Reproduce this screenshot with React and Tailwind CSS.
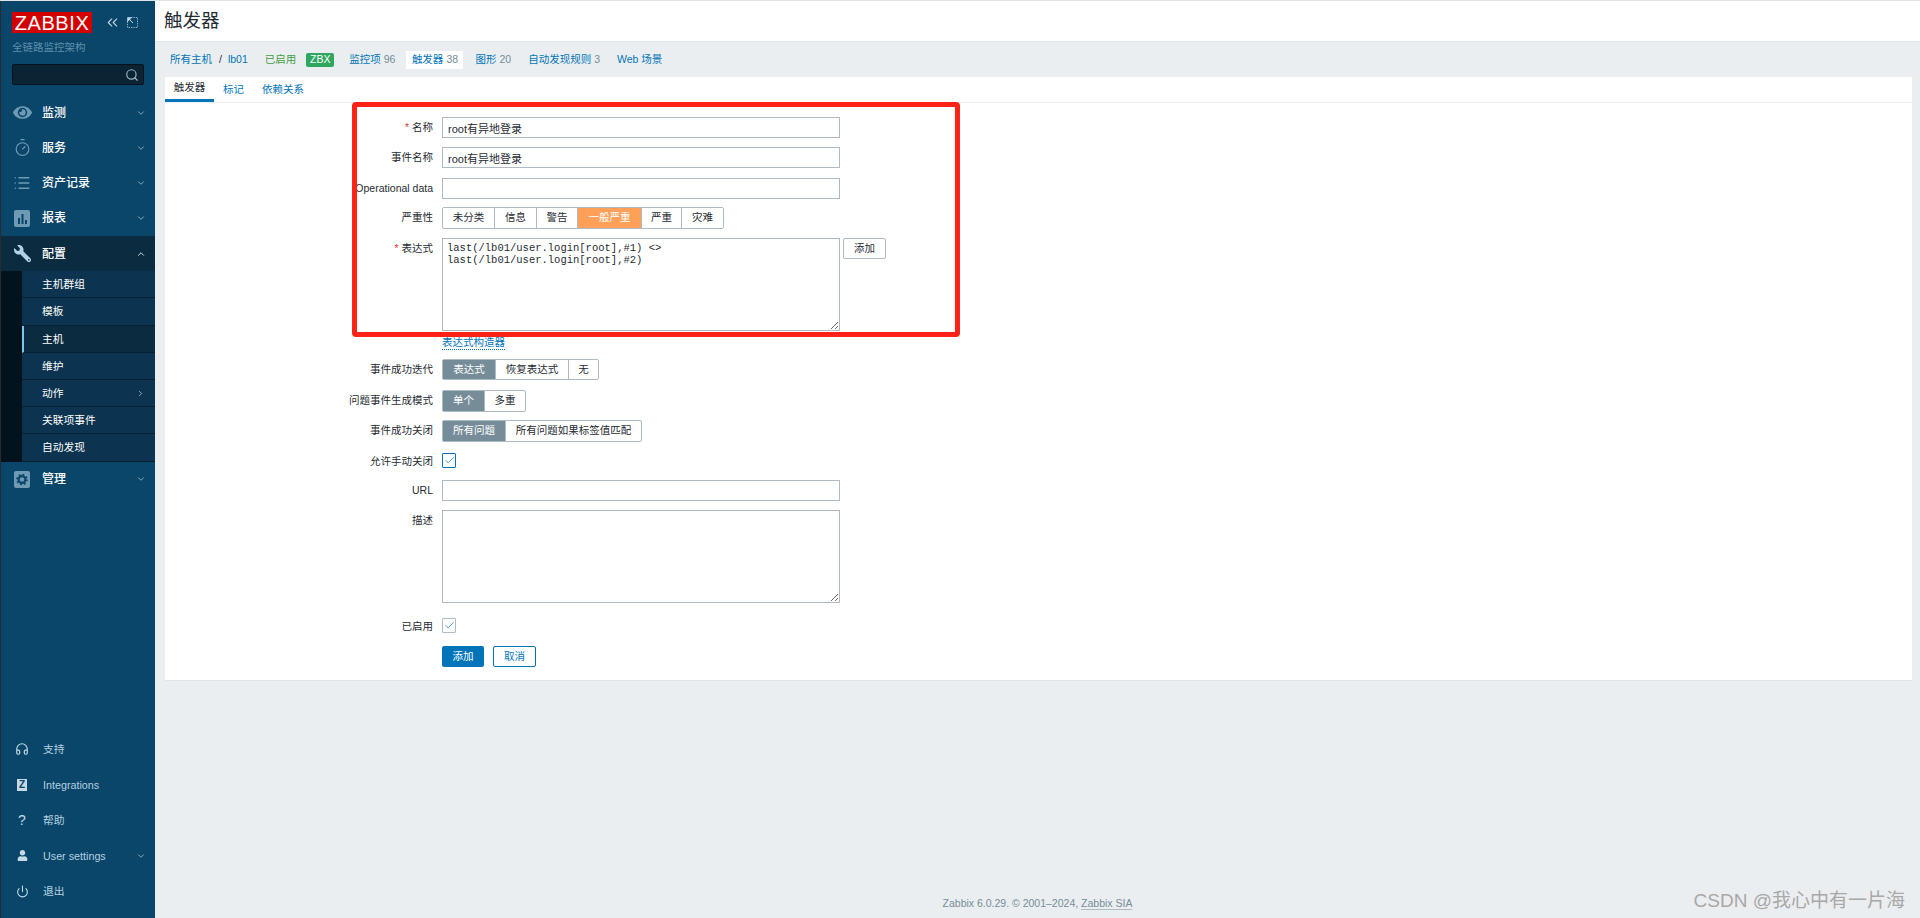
import { ChevronDown, ChevronRight, ChevronUp, ChevronsLeft, Check, Headphones, List, Power, Search, Timer } from "lucide-react";
import { FaEye, FaUser, FaWrench } from "react-icons/fa";

const font = { fontFamily: '"Liberation Sans", "Noto Sans CJK SC", sans-serif' };

function ReportIcon() {
    return (
        <svg width="16" height="17" viewBox="0 0 16 17">
            <rect x="0" y="0" width="16" height="17" rx="2" fill="#6f9ab4" />
            <rect x="4" y="8" width="2" height="6" fill="#0a466a" />
            <rect x="7.5" y="4" width="2" height="10" fill="#0a466a" />
            <rect x="11" y="10" width="2" height="4" fill="#0a466a" />
        </svg>
    );
}

function CogIcon() {
    return (
        <svg width="16" height="17" viewBox="0 0 16 17">
            <rect x="0" y="0" width="16" height="17" rx="2" fill="#6f9ab4" />
            <circle cx="8" cy="8.5" r="3.4" fill="none" stroke="#0a466a" strokeWidth="2.2" />
            <circle cx="8" cy="8.5" r="5" fill="none" stroke="#0a466a" strokeWidth="1.6" strokeDasharray="1.9 2" />
        </svg>
    );
}

function ExpandIcon() {
    return (
        <svg width="11" height="11" viewBox="0 0 11 11" fill="none">
            <path d="M4 .5h6.5V10.5H.5V4" stroke="#8fb1c6" strokeDasharray="1.4 1" />
            <path d="M.5 .5h4.2L.5 4.7z" fill="#c5d7e2" stroke="#c5d7e2" strokeWidth=".6" />
            <path d="M2 2l4 4" stroke="#c5d7e2" />
        </svg>
    );
}

function MenuRow({ icon, label, active, open }) {
    return (
        <div className={`flex h-[35.25px] items-center ${active ? "bg-[#0a2b40]" : ""}`}>
            <div className="flex w-[41px] justify-center pl-[1px] text-[#6f9ab4]">{icon}</div>
            <span className="flex-1 text-[12px] font-medium text-white">{label}</span>
            <span className="mr-[9px] text-[#9dbccd]">
                {open ? <ChevronUp size={10} strokeWidth={2} className="text-white" /> : <ChevronDown size={10} strokeWidth={2} />}
            </span>
        </div>
    );
}

function SubItem({ label, active, arrow }) {
    return (
        <div className={`flex h-[27.2px] items-center border-b border-[#05202f] text-[10.75px] text-white ${active ? "border-l-2 border-l-[#7fc6ef] bg-[#0a2b40] pl-[18px]" : "bg-[#0c3350] pl-[20px]"}`}>
            <span className="flex-1">{label}</span>
            {arrow && <ChevronRight size={9} strokeWidth={2} className="mr-[10px] text-[#b8cfdc]" />}
        </div>
    );
}

function BottomRow({ icon, label, arrow }) {
    return (
        <div className="flex h-[35.5px] items-center text-[10.75px] text-[#b4d0e0]">
            <div className="flex w-[42px] justify-center text-[#c5dae6]">{icon}</div>
            <span className="flex-1">{label}</span>
            {arrow && <ChevronDown size={10} strokeWidth={2} className="mr-[9px] text-[#9dbccd]" />}
        </div>
    );
}

function Sidebar() {
    return (
        <aside className="flex h-full w-[155px] shrink-0 flex-col justify-between border-l border-[#2b2b2b] bg-[#0a466a]">
            <div>
                <div className="flex items-center pl-[11px] pt-[11px]">
                    <div className="flex h-[21px] w-[80px] items-center justify-center bg-[#d40000] text-[20px] leading-none tracking-[0.6px] text-white">ZABBIX</div>
                    <ChevronsLeft size={17} strokeWidth={1.5} className="ml-[12px] text-[#c5d7e2]" />
                    <span className="ml-[6px]"><ExpandIcon /></span>
                </div>
                <div className="pl-[11px] pt-[7px] text-[10.5px] leading-[14px] text-[#5f8fab]">全链路监控架构</div>
                <div className="ml-[11px] mt-[10px] flex h-[21px] w-[132px] items-center justify-end rounded-[2px] border border-[#04131d] bg-[#0a2434] pr-[4px]">
                    <Search size={14} className="text-[#9db5c4]" />
                </div>
                <div className="pt-[10px]">
                    <MenuRow icon={<FaEye size={19} />} label="监测" />
                    <MenuRow icon={<Timer size={19} strokeWidth={1.5} />} label="服务" />
                    <MenuRow icon={<List size={18} strokeWidth={2} />} label="资产记录" />
                    <MenuRow icon={<ReportIcon />} label="报表" />
                    <MenuRow icon={<FaWrench size={17} className="-scale-x-100 text-[#b5d2e4]" />} label="配置" active open />
                    <div className="flex bg-[#03131d]">
                        <div className="w-[21px] shrink-0" />
                        <div className="flex-1">
                            <SubItem label="主机群组" />
                            <SubItem label="模板" />
                            <SubItem label="主机" active />
                            <SubItem label="维护" />
                            <SubItem label="动作" arrow />
                            <SubItem label="关联项事件" />
                            <SubItem label="自动发现" />
                        </div>
                    </div>
                    <MenuRow icon={<CogIcon />} label="管理" />
                </div>
            </div>
            <div className="pb-[9px]">
                <BottomRow icon={<Headphones size={14} strokeWidth={2} />} label="支持" />
                <BottomRow
                    icon={<span className="flex h-[12px] w-[10px] items-center justify-center bg-[#c5dae6] text-[10px] font-bold leading-none text-[#0a466a]">Z</span>}
                    label="Integrations"
                />
                <BottomRow icon={<span className="text-[14px] leading-none">?</span>} label="帮助" />
                <BottomRow icon={<FaUser size={11} />} label="User settings" arrow />
                <BottomRow icon={<Power size={13} strokeWidth={2} />} label="退出" />
            </div>
        </aside>
    );
}

function Row({ label, required, tight, children, className }) {
    return (
        <div className={`flex ${className}`}>
            <div className={`w-[268px] shrink-0 whitespace-nowrap text-right text-[10.5px] leading-[14px] text-[#1f2c33] ${tight ? "pt-px" : "pt-[3px]"}`}>
                {required && <span className="mr-[3px] text-[#e33734]">*</span>}
                {label}
            </div>
            <div className="ml-[9px] flex-1">{children}</div>
        </div>
    );
}

function TextInput({ value }) {
    return (
        <input
            readOnly
            value={value || ""}
            style={font}
            className="block h-[21px] w-[398px] border border-[#acbbc6] bg-white px-[5px] text-[11px] text-[#1f2c33] outline-none"
        />
    );
}

function Segments({ items, selected, color = "bg-[#768d99]", h = "h-[22px]" }) {
    return (
        <div className={`flex w-fit ${h} rounded-[2px] border border-[#acbbc6] bg-white text-[10.5px] text-[#1f2c33]`}>
            {items.map((item, i) => (
                <div
                    key={item.t}
                    style={{ width: item.w }}
                    className={`flex items-center justify-center ${i > 0 ? "border-l border-[#acbbc6]" : ""} ${i === selected ? `${color} text-white` : ""}`}
                >
                    {item.t}
                </div>
            ))}
        </div>
    );
}

function TickBox({ strong }) {
    return (
        <div className={`flex h-[15px] w-[14px] items-center justify-center rounded-[1px] border bg-white ${strong ? "border-[#0275b8]" : "border-[#acbbc6]"}`}>
            <Check size={11} strokeWidth={1.6} className="text-[#0275b8]" />
        </div>
    );
}

function TriggerForm() {
    return (
        <div className="relative pt-[14px]">
            <Row label="名称" required className="mb-[9px]"><TextInput value="root有异地登录" /></Row>
            <Row label="事件名称" className="mb-[10px]"><TextInput value="root有异地登录" /></Row>
            <Row label="Operational data" className="mb-[8px]"><TextInput /></Row>
            <Row label="严重性" className="mb-[9px]">
                <Segments
                    selected={3}
                    color="bg-[#ffa059]"
                    items={[
                        { t: "未分类", w: 51 },
                        { t: "信息", w: 42 },
                        { t: "警告", w: 41 },
                        { t: "一般严重", w: 64 },
                        { t: "严重", w: 40 },
                        { t: "灾难", w: 42 },
                    ]}
                />
            </Row>
            <Row label="表达式" required className="mb-[5px]">
                <div className="flex items-start">
                    <textarea
                        readOnly
                        value={"last(/lb01/user.login[root],#1) <>\nlast(/lb01/user.login[root],#2)"}
                        className="block h-[93px] w-[398px] border border-[#acbbc6] bg-white px-[4px] py-[3px] font-['Liberation_Mono',monospace] text-[10.5px] leading-[12px] text-[#1f2c33] outline-none"
                    />
                    <button className="ml-[3px] h-[21px] w-[43px] rounded-[2px] border border-[#acbbc6] bg-white text-[10.5px] text-[#1f2c33]">添加</button>
                </div>
            </Row>
            <Row label="" className="mb-[9px]">
                <span className="block w-fit border-b border-dotted border-[#0275b8] text-[10.5px] leading-[13px] text-[#0275b8]">表达式构造器</span>
            </Row>
            <Row label="事件成功迭代" className="mb-[10px]">
                <Segments selected={0} h="h-[21px]" items={[{ t: "表达式", w: 52 }, { t: "恢复表达式", w: 73 }, { t: "无", w: 30 }]} />
            </Row>
            <Row label="问题事件生成模式" className="mb-[8px]">
                <Segments selected={0} items={[{ t: "单个", w: 41 }, { t: "多重", w: 41 }]} />
            </Row>
            <Row label="事件成功关闭" className="mb-[11px]">
                <Segments selected={0} items={[{ t: "所有问题", w: 62 }, { t: "所有问题如果标签值匹配", w: 136 }]} />
            </Row>
            <Row label="允许手动关闭" tight className="mb-[12px]"><TickBox strong /></Row>
            <Row label="URL" className="mb-[9px]"><TextInput /></Row>
            <Row label="描述" className="mb-[15px]">
                <textarea readOnly className="block h-[93px] w-[398px] border border-[#acbbc6] bg-white outline-none" />
            </Row>
            <Row label="已启用" tight className="mb-[13px]"><TickBox /></Row>
            <Row label="" className="pb-[13px]">
                <div className="flex gap-[9px]">
                    <button className="h-[21px] w-[42px] rounded-[2px] bg-[#0275b8] text-[10.5px] text-white">添加</button>
                    <button className="h-[21px] w-[43px] rounded-[2px] border border-[#0275b8] bg-white text-[10.5px] text-[#0275b8]">取消</button>
                </div>
            </Row>
            {/* red annotation drawn over the screenshot */}
            <div className="pointer-events-none absolute left-[187px] top-[-1px] h-[235px] w-[608px] rounded-[4px] border-[5px] border-[#ff2317]" />
        </div>
    );
}

function HostNav() {
    return (
        <div className="flex h-[35px] items-center pl-[5px] text-[10.5px] text-[#0275b8]">
            <span>所有主机</span>
            <span className="ml-[7px] text-[#1f2c33]">/</span>
            <span className="ml-[6px]">lb01</span>
            <span className="ml-[17px] text-[#429e47]">已启用</span>
            <span className="ml-[10px] flex h-[14px] w-[28px] items-center justify-center rounded-[2px] bg-[#2fa85f] text-[10.5px] leading-none text-white">ZBX</span>
            <span className="ml-[15px]">监控项</span>
            <span className="ml-[3px] text-[#768d99]">96</span>
            <div className="ml-[11px] flex h-[18px] w-[57px] items-center justify-center bg-white">
                <span className="text-[#0275b8]">触发器</span>
                <span className="ml-[3px] text-[#768d99]">38</span>
            </div>
            <span className="ml-[12px]">图形</span>
            <span className="ml-[3px] text-[#768d99]">20</span>
            <span className="ml-[17px]">自动发现规则</span>
            <span className="ml-[3px] text-[#768d99]">3</span>
            <span className="ml-[17px]">Web 场景</span>
        </div>
    );
}

export default function App() {
    return (
        <div style={font} className="flex h-[918px] w-full overflow-hidden border-t border-[#dfe4e7] bg-[#ebeef0]">
            <Sidebar />
            <main className="flex flex-1 flex-col">
                <div className="flex h-[41px] items-center border-b border-[#dfe4e7] bg-white pl-[9px] text-[18.5px] text-[#1f2c33]">触发器</div>
                <div className="flex-1 pl-[10px] pr-[8px]">
                    <HostNav />
                    <div className="border-b border-[#dfe4e7] bg-white">
                        <div className="flex h-[26px] items-center border-b border-[#ebeef0] text-[10.5px] text-[#0275b8]">
                            <div className="flex h-full w-[49px] items-center justify-center border-b-[3px] border-[#0275b8] text-[#1f2c33]">触发器</div>
                            <span className="ml-[9px]">标记</span>
                            <span className="ml-[18px]">依赖关系</span>
                        </div>
                        <TriggerForm />
                    </div>
                </div>
                <div className="relative flex h-[30px] items-start justify-center pt-[8px] text-[10.5px] text-[#768d99]">
                    <span>
                        Zabbix 6.0.29. © 2001–2024, <span className="border-b border-[#acbbc6]">Zabbix SIA</span>
                    </span>
                    <span className="absolute right-[15px] top-[-1px] text-[19px] text-[#a8a8a8]">CSDN @我心中有一片海</span>
                </div>
            </main>
        </div>
    );
}
